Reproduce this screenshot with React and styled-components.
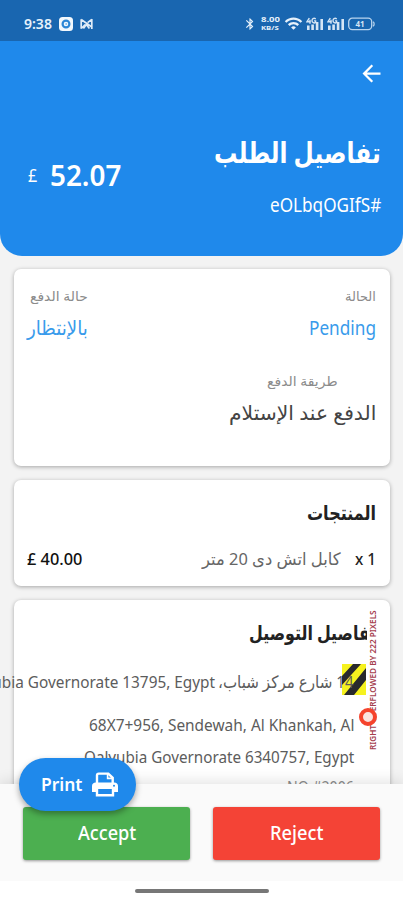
import React, { useLayoutEffect, useRef, useState } from 'react';
import styled, { createGlobalStyle } from 'styled-components';
import { MdArrowBack, MdBluetooth, MdWifi } from 'react-icons/md';

const GlobalStyle = createGlobalStyle`
  * {
    box-sizing: border-box;
  }

  body {
    margin: 0;
    font-family: 'Noto Sans', 'DejaVu Sans', sans-serif;
  }
`;

const Screen = styled.div`
  width: 403px;
  height: 900px;
  display: flex;
  flex-direction: column;
  overflow: hidden;
  background: #f3f3f3;
`;

const StatusBar = styled.div`
  height: 41px;
  flex-shrink: 0;
  padding: 6px 28px 0 24px;
  display: flex;
  align-items: center;
  justify-content: space-between;
  background: #1966b0;
  color: #e6f1fb;
`;

const StatusGroup = styled.div`
  display: flex;
  align-items: center;
  gap: ${({ $gap }) => $gap}px;
`;

const NetSpeed = styled.div`
  width: 20px;
  margin-right: 1px;
  display: flex;
  flex-direction: column;
  align-items: center;
`;

const Header = styled.header`
  height: 215px;
  flex-shrink: 0;
  background: #1f89eb;
  color: #fff;
  border-radius: 0 0 22px 22px;
`;

const TopRow = styled.div`
  height: 64px;
  padding-right: 18px;
  display: flex;
  align-items: center;
  justify-content: flex-end;
`;

const Summary = styled.div`
  padding: 25px 22px 0 28px;
  display: flex;
  justify-content: space-between;
`;

const Price = styled.div`
  margin-top: 25px;
  height: 40px;
  display: flex;
  align-items: center;
  gap: 13px;
`;

const Stack = styled.div`
  display: flex;
  flex-direction: column;
  align-items: ${({ $align }) => $align || 'flex-end'};
  gap: ${({ $gap }) => $gap || 8}px;
`;

const Content = styled.main`
  height: 528px;
  flex-shrink: 0;
  overflow: hidden;
  padding: 13px 13px 0 14px;
  display: flex;
  flex-direction: column;
  gap: 14px;
`;

const Card = styled.section`
  position: relative;
  flex-shrink: 0;
  height: ${({ $height }) => $height}px;
  padding: 17px 14px 0 13px;
  background: #fff;
  border-radius: 7px;
  box-shadow: 0 1px 4px rgba(0, 0, 0, 0.32);
`;

const Row = styled.div`
  margin-top: ${({ $top }) => $top || 0}px;
  display: flex;
  align-items: center;
  justify-content: ${({ $justify }) => $justify || 'space-between'};
`;

const Item = styled.div`
  display: flex;
  gap: 14px;
`;

const Addresses = styled.div`
  margin-top: 19px;
  padding-right: 22px;
  display: flex;
  flex-direction: column;
  align-items: flex-end;
`;

const AddressLine = styled.div`
  height: ${({ $height }) => $height}px;
  display: flex;
  justify-content: flex-end;
  gap: 3px;
`;

const TextBox = styled.div`
  flex-shrink: 0;
  display: flex;
  justify-content: flex-start;
  width: ${({ $width }) => $width}px;
  height: ${({ $line }) => $line}px;
  line-height: ${({ $line }) => $line}px;
  font-size: ${({ $size }) => $size}px;
  font-weight: ${({ $weight }) => $weight || 400};
  color: ${({ $color }) => $color || 'inherit'};
`;

const TextInner = styled.span`
  flex-shrink: 0;
  white-space: nowrap;
  transform-origin: left center;
`;

const Hazard = styled.svg`
  position: absolute;
  top: 64px;
  left: 328px;
  width: 24px;
  height: 31px;
`;

const OverflowLabel = styled.div`
  position: absolute;
  top: 9px;
  left: 353px;
  width: 11px;
  height: 143px;
  display: flex;
  align-items: center;
  justify-content: center;
  background: #fff;
  color: #a5404f;
  writing-mode: vertical-rl;
  transform: rotate(180deg);
  font-size: 8.2px;
  font-weight: 600;
  white-space: nowrap;
`;

const TapRing = styled.div`
  position: absolute;
  top: 108px;
  left: 345px;
  width: 18px;
  height: 18px;
  border: 4px solid #f5432c;
  border-radius: 50%;
  background: #fbe3df;
`;

const Actions = styled.footer`
  position: relative;
  height: 97px;
  flex-shrink: 0;
  padding: 23px 23px 0;
  display: flex;
  gap: 23px;
  background: #fafafa;
  box-shadow: 0 -2px 14px rgba(0, 0, 0, 0.12);
`;

const ActionButton = styled.button`
  flex: 1;
  height: 53px;
  padding: 0 0 2px;
  display: flex;
  align-items: center;
  justify-content: center;
  border: 0;
  border-radius: 3px;
  background: ${({ $color }) => $color};
  color: #fff;
  font-family: inherit;
  box-shadow: 0 1px 3px rgba(0, 0, 0, 0.4);
`;

const PrintButton = styled.button`
  position: absolute;
  top: -26px;
  left: 19px;
  width: 117px;
  height: 53px;
  padding: 0 18px 0 22px;
  display: flex;
  align-items: center;
  justify-content: space-between;
  border: 0;
  border-radius: 27px;
  background: #1f89eb;
  color: #fff;
  font-family: inherit;
  box-shadow: 0 3px 6px rgba(0, 0, 0, 0.35);
`;

const HomeArea = styled.div`
  position: relative;
  height: 19px;
  flex-shrink: 0;
  padding-top: 8px;
  display: flex;
  justify-content: center;
  background: #fff;
`;

const HomeBar = styled.div`
  width: 134px;
  height: 4px;
  border-radius: 2px;
  background: #777;
`;

// Condenses or stretches one line of text so that it spans the given width.
const Text = ({ width, line = 24, size, weight, color, dir = 'ltr', children }) => {
  const ref = useRef(null);
  const [scale, setScale] = useState(1);

  useLayoutEffect(() => {
    setScale(width / ref.current.offsetWidth);
  }, [width, children]);

  return (
    <TextBox $width={width} $line={line} $size={size} $weight={weight} $color={color}>
      <TextInner ref={ref} dir={dir} style={{ transform: `scaleX(${scale})` }}>
        {children}
      </TextInner>
    </TextBox>
  );
};

const CameraIcon = () => (
  <svg width="14" height="14" viewBox="0 0 14 14">
    <rect width="14" height="14" rx="3.5" fill="#f2f8fd" />
    <circle cx="7" cy="7" r="3.4" fill="none" stroke="#2b86d6" strokeWidth="2.2" />
    <circle cx="7.2" cy="7" r="1" fill="#8fc0ea" />
  </svg>
);

const BowIcon = () => (
  <svg width="13" height="12" viewBox="0 0 13 12" fill="none" stroke="#dfebf7" strokeWidth="1.7">
    <path d="M1.2 1.2v9.6M1.2 1.5 11.8 9M1.2 10.5l4-4M11.8 1v10M7.6 4.6l4.2-3.3M3.4 10.6l3-4 3 4" />
  </svg>
);

const SignalIcon = () => (
  <svg width="18" height="14" viewBox="0 0 18 14" fill="#d5e5f5">
    <path d="M1 8.5h2.6V13H1zM5.3 7.5h2.6V13H5.3zM9.8 5h2.6v8H9.8zM14.4 2H17v11h-2.6z" />
    <path d="M3.3 1 1 4.8h3.8M4 2.8v4M9.8 1.8C7.5.6 6 1.8 6 3.7c0 2 2.2 2.8 3.6 1.7V3.9H8" fill="none" stroke="#d5e5f5" strokeWidth="1.4" />
  </svg>
);

const BatteryIcon = () => (
  <svg width="27" height="14" viewBox="0 0 27 14">
    <rect x=".7" y="1.2" width="23" height="11.4" rx="3.5" fill="none" stroke="#b8d4ee" strokeWidth="1.3" />
    <path d="M25 4.8c1.5.8 1.5 3.6 0 4.4" stroke="#b8d4ee" strokeWidth="1.3" fill="none" />
    <text x="12" y="10" textAnchor="middle" fontSize="8" fontWeight="700" fill="#d5e5f5">41</text>
  </svg>
);

const PrinterIcon = () => (
  <svg width="26" height="25" viewBox="0 0 26 25" fill="none" stroke="#fff">
    <path d="M5 11V3.3c0-1 .6-1.7 1.7-1.7h9.6l4.4 4.2V11" strokeWidth="2.4" />
    <path d="M15.6 1.6v4.8h5" strokeWidth="1.6" />
    <path d="M0 20v-6c0-2.2 1.5-3.6 3.8-3.6h18.4c2.3 0 3.8 1.4 3.8 3.6v6h-4v-3H4v3z" fill="#fff" stroke="none" />
    <path d="M5 16.5v6.7h16v-6.7" strokeWidth="2.4" />
    <circle cx="22" cy="13.8" r="1" fill="#1f89eb" stroke="none" />
  </svg>
);

const GREY = '#8b8b8b';
const BLUE = '#399beb';
const BODY = '#5c5c5c';

const App = () => (
  <>
    <GlobalStyle />
    <Screen>
      <StatusBar>
        <StatusGroup $gap={7}>
          <Text width={28} size={14} weight={600}>9:38</Text>
          <CameraIcon />
          <BowIcon />
        </StatusGroup>
        <StatusGroup $gap={3}>
          <MdBluetooth size={14} />
          <NetSpeed>
            <Text width={19} size={7} line={9} weight={700}>8.00</Text>
            <Text width={18} size={6} line={8} weight={700}>KB/S</Text>
          </NetSpeed>
          <MdWifi size={19} />
          <SignalIcon />
          <SignalIcon />
          <BatteryIcon />
        </StatusGroup>
      </StatusBar>

      <Header>
        <TopRow>
          <MdArrowBack size={27} />
        </TopRow>
        <Summary>
          <Price>
            <Text width={9} size={18} line={40}>£</Text>
            <Text width={71} size={29} line={40} weight={600}>52.07</Text>
          </Price>
          <Stack $gap={16}>
            <Text width={167} size={29} line={44} weight={700} dir="rtl">تفاصيل الطلب</Text>
            <Text width={111} size={19} line={30} dir="rtl">#eOLbqOGIfS</Text>
          </Stack>
        </Summary>
      </Header>

      <Content>
        <Card $height={197}>
          <Row>
            <Stack>
              <Text width={58} size={13} line={20} color={GREY} dir="rtl">حالة الدفع</Text>
              <Text width={61} size={20} line={28} color={BLUE} dir="rtl">بالإنتظار</Text>
            </Stack>
            <Stack>
              <Text width={31} size={13} line={20} color={GREY} dir="rtl">الحالة</Text>
              <Text width={67} size={19} line={28} color={BLUE}>Pending</Text>
            </Stack>
          </Row>
          <Row $top={29} $justify="flex-end">
            <Stack $align="center">
              <Text width={71} size={13} line={20} color={GREY} dir="rtl">طريقة الدفع</Text>
              <Text width={147} size={20} line={28} color="#444" dir="rtl">الدفع عند الإستلام</Text>
            </Stack>
          </Row>
        </Card>

        <Card $height={106}>
          <Row $justify="flex-end">
            <Text width={69} size={20} line={32} weight={700} color="#222" dir="rtl">المنتجات</Text>
          </Row>
          <Row $top={18}>
            <Text width={55} size={16} weight={500} color="#111">£ 40.00</Text>
            <Item>
              <Text width={139} size={17} color="#666" dir="rtl">كابل اتش دى 20 متر</Text>
              <Text width={21} size={16} weight={500} color="#222">x 1</Text>
            </Item>
          </Row>
        </Card>

        <Card $height={260}>
          <Row $justify="flex-end">
            <Text width={127} size={20} line={32} weight={700} color="#222" dir="rtl">تفاصيل التوصيل</Text>
          </Row>
          <Hazard viewBox="0 0 24 31">
            <path d="M0 0h24v31H0z" fill="#f6f21f" />
            <path d="M0 12 11 0h8L0 21zM2 31h10l12-15V4z" fill="#29292c" />
          </Hazard>
          <Addresses>
            <AddressLine $height={44}>
              <Text width={255} size={16} line={28} color={BODY}>Qalyubia Governorate 13795, Egypt</Text>
              <Text width={136} size={17} line={28} color={BODY} dir="rtl">14 شارع مركز شباب،</Text>
            </AddressLine>
            <AddressLine $height={32}>
              <Text width={265} size={16} line={26} color={BODY}>68X7+956, Sendewah, Al Khankah, Al</Text>
            </AddressLine>
            <AddressLine $height={30}>
              <Text width={270} size={16} line={26} color={BODY}>Qalyubia Governorate 6340757, Egypt</Text>
            </AddressLine>
            <AddressLine $height={32}>
              <Text width={67} size={16} line={26} color={GREY}>NO #2006</Text>
            </AddressLine>
          </Addresses>
          <OverflowLabel>RIGHT OVERFLOWED BY 222 PIXELS</OverflowLabel>
          <TapRing />
        </Card>
      </Content>

      <Actions>
        <ActionButton $color="#4caf50">
          <Text width={58} size={20} line={30} weight={500}>Accept</Text>
        </ActionButton>
        <ActionButton $color="#f44336">
          <Text width={53} size={20} line={30} weight={500}>Reject</Text>
        </ActionButton>
        <PrintButton>
          <Text width={41} size={17} weight={600}>Print</Text>
          <PrinterIcon />
        </PrintButton>
      </Actions>
      <HomeArea>
        <HomeBar />
      </HomeArea>
    </Screen>
  </>
);

export default App;
